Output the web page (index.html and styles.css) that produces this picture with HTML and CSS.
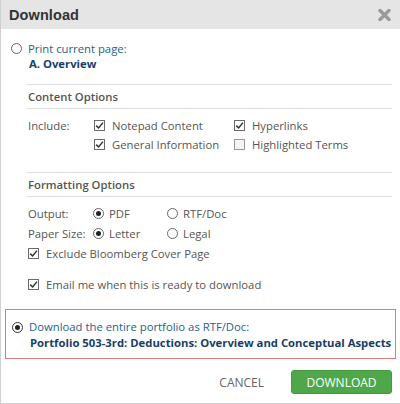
FILE: index.html
```
<!DOCTYPE html>
<html>
<head>
<meta charset="utf-8">
<link rel="stylesheet" href="styles.css">
</head>
<body>
<div class="dialog">
  <div class="header">
    <h1 class="title">Download</h1>
    <span class="close" aria-label="Close">
      <svg width="13" height="12" viewBox="0 0 13 12"><path d="M2 1.5 L11 10.5 M11 1.5 L2 10.5" stroke="#9a9a9a" stroke-width="3.4" stroke-linecap="round"/></svg>
    </span>
  </div>
  <div class="body">
    <div class="choice">
      <span class="radio"></span>
      <div class="choice-text">
        <div class="link">Print current page:</div>
        <div class="strong">A. Overview</div>
      </div>
    </div>

    <div class="section content-section">
      <div class="section-title">Content Options</div>
      <div class="include-grid">
        <span class="label">Include:</span>
        <span class="item"><span class="cb on"><svg width="9" height="9" viewBox="0 0 9 9"><path d="M1.2 4.6 L3.6 7 L8 1.6" fill="none" stroke="#333" stroke-width="1.5"/></svg></span>Notepad Content</span>
        <span class="item"><span class="cb on"><svg width="9" height="9" viewBox="0 0 9 9"><path d="M1.2 4.6 L3.6 7 L8 1.6" fill="none" stroke="#333" stroke-width="1.5"/></svg></span>Hyperlinks</span>
        <span class="label"></span>
        <span class="item"><span class="cb on"><svg width="9" height="9" viewBox="0 0 9 9"><path d="M1.2 4.6 L3.6 7 L8 1.6" fill="none" stroke="#333" stroke-width="1.5"/></svg></span>General Information</span>
        <span class="item"><span class="cb off"></span>Highlighted Terms</span>
      </div>
    </div>

    <div class="section format-section">
      <div class="section-title">Formatting Options</div>
      <div class="format-grid">
        <span class="label">Output:</span>
        <span class="item"><span class="rb on"></span>PDF</span>
        <span class="item"><span class="rb"></span>RTF/Doc</span>
        <span class="label">Paper Size:</span>
        <span class="item"><span class="rb on"></span>Letter</span>
        <span class="item"><span class="rb"></span>Legal</span>
      </div>
      <div class="check-line"><span class="cb on"><svg width="9" height="9" viewBox="0 0 9 9"><path d="M1.2 4.6 L3.6 7 L8 1.6" fill="none" stroke="#333" stroke-width="1.5"/></svg></span>Exclude Bloomberg Cover Page</div>
      <div class="check-line email"><span class="cb on"><svg width="9" height="9" viewBox="0 0 9 9"><path d="M1.2 4.6 L3.6 7 L8 1.6" fill="none" stroke="#333" stroke-width="1.5"/></svg></span>Email me when this is ready to download</div>
    </div>

    <div class="choice selected">
      <span class="radio on"></span>
      <div class="choice-text">
        <div class="link">Download the entire portfolio as RTF/Doc:</div>
        <div class="strong">Portfolio 503-3rd: Deductions: Overview and Conceptual Aspects</div>
      </div>
    </div>

    <div class="footer">
      <button class="btn-cancel">CANCEL</button>
      <button class="btn-download">DOWNLOAD</button>
    </div>
  </div>
</div>
</body>
</html>
```

FILE: styles.css
```
* { box-sizing: border-box; }
html, body { margin: 0; padding: 0; background: #fff; }
body { font-family: "Open Sans", "Noto Sans", sans-serif; font-size: 11.3px; color: #555; }

.dialog {
  width: 400px;
  height: 404px;
  border-left: 1px solid #d0d0d0;
  border-bottom: 1px solid #d0d0d0;
  background: #fff;
  overflow: hidden;
}

.header {
  height: 29px;
  background: #e5e5e5;
  display: flex;
  align-items: center;
  justify-content: space-between;
  padding: 0 8px 0 8px;
}
.title {
  margin: 0;
  font-family: "Liberation Sans", Arial, sans-serif;
  font-weight: bold;
  font-size: 14.5px;
  color: #333;
  letter-spacing: 0.1px;
}
.close { display: flex; align-items: center; margin-top: 1px; margin-right: 1px; }

.body { padding-top: 12px; }

.choice { display: flex; padding-left: 10px; }
.choice-text { padding-left: 6px; line-height: 15px; }
.link { color: #25608f; }
.strong { color: #173e6a; font-weight: 700; padding-left: 1px; }

.radio, .rb {
  width: 11px;
  height: 11px;
  border: 1px solid #666;
  border-radius: 50%;
  background: #fff;
  display: inline-flex;
  align-items: center;
  justify-content: center;
  flex: none;
}
.choice .radio { margin-top: 2px; }
.radio.on::after, .rb.on::after {
  content: "";
  width: 5px;
  height: 5px;
  border-radius: 50%;
  background: #222;
}

.section { margin: 13px 8px 0 26px; }
.section-title {
  border-top: 1px solid #ddd;
  border-bottom: 1px solid #ddd;
  padding: 4px 0 4px 1px;
  line-height: 15px;
  font-weight: 600;
  color: #555;
}

.include-grid {
  display: grid;
  grid-template-columns: 66px 140px 1fr;
  grid-auto-rows: 19px;
  align-items: center;
  margin-top: 7px;
  padding-left: 1px;
}
.format-section { margin-top: 18px; }
.format-grid {
  display: grid;
  grid-template-columns: 65px 74px 1fr;
  grid-auto-rows: 20px;
  align-items: center;
  margin-top: 6px;
  padding-left: 1px;
}
.item { display: flex; align-items: center; }

.cb {
  width: 11px;
  height: 11px;
  border: 1px solid #6a6a6a;
  background: #fff;
  display: inline-flex;
  align-items: center;
  justify-content: center;
  margin-right: 7px;
  flex: none;
}
.cb.off { border-color: #999; background: #f4f4f4; }
.rb { margin-right: 5px; }

.check-line {
  display: flex;
  align-items: center;
  height: 20px;
  padding-left: 1px;
}
.email { margin-top: 11px; }

.choice.selected {
  margin: 15px 4px 0 4px;
  border: 1px solid #dc7b7b;
  padding: 9px 0 7px 6px;
  line-height: 16px;
}
.choice.selected .choice-text { line-height: 16px; }
.choice.selected .radio { margin-top: 3px; border-color: #333; }

.footer {
  display: flex;
  justify-content: flex-end;
  align-items: center;
  margin-top: 11px;
  padding-right: 8px;
}
.btn-cancel {
  font-family: "Open Sans", sans-serif;
  font-size: 12px;
  color: #666;
  background: none;
  border: none;
  padding: 0;
  margin-right: 27px;
}
.btn-download {
  font-family: "Open Sans", sans-serif;
  font-size: 12px;
  color: #fff;
  background: #4ea84a;
  border: 1px solid #459a41;
  border-radius: 3px;
  width: 101px;
  height: 24px;
  padding: 0;
}
```
